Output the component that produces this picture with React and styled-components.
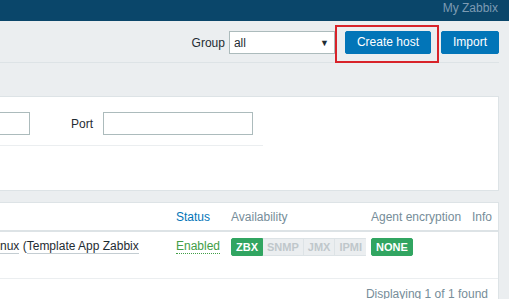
import styled, { createGlobalStyle } from 'styled-components';

const Global = createGlobalStyle`
    html, body {
        margin: 0;
        padding: 0;
        background: #ebeef0;
        font-family: "Liberation Sans", Arial, sans-serif;
        font-size: 12px;
        color: #1f2c33;
        overflow: hidden;
    }
`;

const Page = styled.div`
    width: 509px;
    height: 299px;
    overflow: hidden;
`;

const TopNav = styled.div`
    height: 21px;
    background: #0a466a;
    display: flex;
    justify-content: flex-end;
    align-items: flex-end;
    padding-right: 11px;
    overflow: hidden;
`;

const NavLink = styled.span`
    color: #7d9bb3;
    font-size: 12px;
    line-height: 14px;
    margin-bottom: 6px;
`;

const Header = styled.div`
    height: 42px;
    margin-right: 10px;
    border-bottom: 1px solid #dde3e6;
    display: flex;
    justify-content: flex-end;
    align-items: flex-start;
    padding-top: 10px;
    box-sizing: border-box;
`;

const Controls = styled.div`
    display: flex;
    align-items: center;
    gap: 10px;
`;

const Field = styled.label`
    display: flex;
    align-items: center;
    gap: 4px;
`;

const Select = styled.div`
    width: 106px;
    height: 23px;
    box-sizing: border-box;
    background: #fff;
    border: 1px solid #acbbbc;
    display: flex;
    align-items: center;
    justify-content: space-between;
    padding: 0 5px 0 4px;
    font-size: 12px;
`;

const Arrow = styled.span`
    font-size: 9px;
    color: #1f2c33;
`;

const Button = styled.button`
    height: 23px;
    padding: 0 11px;
    background: #0275b8;
    border: 1px solid #0275b8;
    border-radius: 2px;
    color: #fff;
    font-family: inherit;
    font-size: 12px;
    line-height: 21px;
    cursor: pointer;
`;

const Highlight = styled.span`
    position: relative;
    display: inline-flex;

    &::after {
        content: "";
        position: absolute;
        top: -6px;
        left: -10px;
        right: -8px;
        bottom: -9px;
        border: 2px solid #d8232a;
    }
`;

const Panel = styled.div`
    background: #fff;
    border: 1px solid #dde3e6;
    border-left: none;
    margin-right: 10px;
    margin-top: ${({ $top }) => $top}px;
`;

const FilterRow = styled.div`
    width: 263px;
    padding: 15px 0 10px;
    border-bottom: 1px solid #ebeef0;
    display: flex;
    align-items: center;
`;

const Input = styled.div`
    height: 23px;
    box-sizing: border-box;
    width: ${({ $w }) => $w}px;
    margin-left: ${({ $ml }) => $ml || 0}px;
    background: #fff;
    border: 1px solid #acbbbc;
    flex-shrink: 0;
`;

const Label = styled.span`
    margin: 0 10px 0 41px;
    color: #1f2c33;
`;

const FilterSpace = styled.div`
    height: 44px;
`;

const Table = styled.table`
    width: 100%;
    border-collapse: collapse;
    table-layout: fixed;
`;

const Th = styled.th`
    text-align: left;
    font-weight: normal;
    color: ${({ $link }) => ($link ? '#0275b8' : '#768d99')};
    padding: 7px 5px 6px;
    line-height: 14px;
    border-bottom: 2px solid #dde3e6;
    white-space: nowrap;
`;

const Td = styled.td`
    vertical-align: top;
    padding: 7px 5px 22px;
    line-height: 14px;
    border-bottom: 1px solid #ebeef0;
    white-space: nowrap;
    overflow: hidden;
`;

const TplLink = styled.span`
    color: #1f2c33;
    border-bottom: 1px solid #c4cdd2;
`;

const Status = styled.span`
    color: #429e47;
    border-bottom: 1px dotted #429e47;
`;

const Badges = styled.span`
    display: inline-flex;
`;

const Badge = styled.span`
    display: inline-block;
    height: 16px;
    line-height: 16px;
    padding: 0 4px;
    font-size: 11px;
    font-weight: bold;
    background: ${({ $on }) => ($on ? '#31a561' : '#ebeef0')};
    color: ${({ $on }) => ($on ? '#fff' : '#bfc7cb')};
    border: 1px solid ${({ $on }) => ($on ? '#31a561' : '#dde3e6')};
    border-left-width: ${({ $first }) => ($first ? 1 : 0)}px;
    border-radius: ${({ $r }) => $r || '2px'};
    margin-top: -1px;
`;

const Footer = styled.div`
    text-align: right;
    color: #768d99;
    padding: 8px 10px 0;
    line-height: 14px;
`;

export default function App() {
    return (
        <Page>
            <Global />
            <TopNav>
                <NavLink>My Zabbix</NavLink>
            </TopNav>
            <Header>
                <Controls>
                    <Field>
                        Group
                        <Select>
                            <span>all</span>
                            <Arrow>▼</Arrow>
                        </Select>
                    </Field>
                    <Highlight>
                        <Button>Create host</Button>
                    </Highlight>
                    <Button>Import</Button>
                </Controls>
            </Header>
            <Panel $top={33}>
                <FilterRow>
                    <Input $w={150} $ml={-120} />
                    <Label>Port</Label>
                    <Input $w={150} />
                </FilterRow>
                <FilterSpace />
            </Panel>
            <Panel $top={11}>
                <Table>
                    <colgroup>
                        <col style={{ width: 171 }} />
                        <col style={{ width: 55 }} />
                        <col style={{ width: 140 }} />
                        <col style={{ width: 101 }} />
                        <col />
                    </colgroup>
                    <thead>
                        <tr>
                            <Th></Th>
                            <Th $link>Status</Th>
                            <Th>Availability</Th>
                            <Th>Agent encryption</Th>
                            <Th>Info</Th>
                        </tr>
                    </thead>
                    <tbody>
                        <tr>
                            <Td style={{ paddingLeft: 0 }}>
                                <TplLink>nux</TplLink> (<TplLink>Template App Zabbix</TplLink>
                            </Td>
                            <Td><Status>Enabled</Status></Td>
                            <Td>
                                <Badges>
                                    <Badge $on $first $r="2px 0 0 2px">ZBX</Badge>
                                    <Badge $r="0">SNMP</Badge>
                                    <Badge $r="0">JMX</Badge>
                                    <Badge $r="0 2px 2px 0">IPMI</Badge>
                                </Badges>
                            </Td>
                            <Td><Badge $on $first>NONE</Badge></Td>
                            <Td></Td>
                        </tr>
                    </tbody>
                </Table>
                <Footer>Displaying 1 of 1 found</Footer>
            </Panel>
        </Page>
    );
}
